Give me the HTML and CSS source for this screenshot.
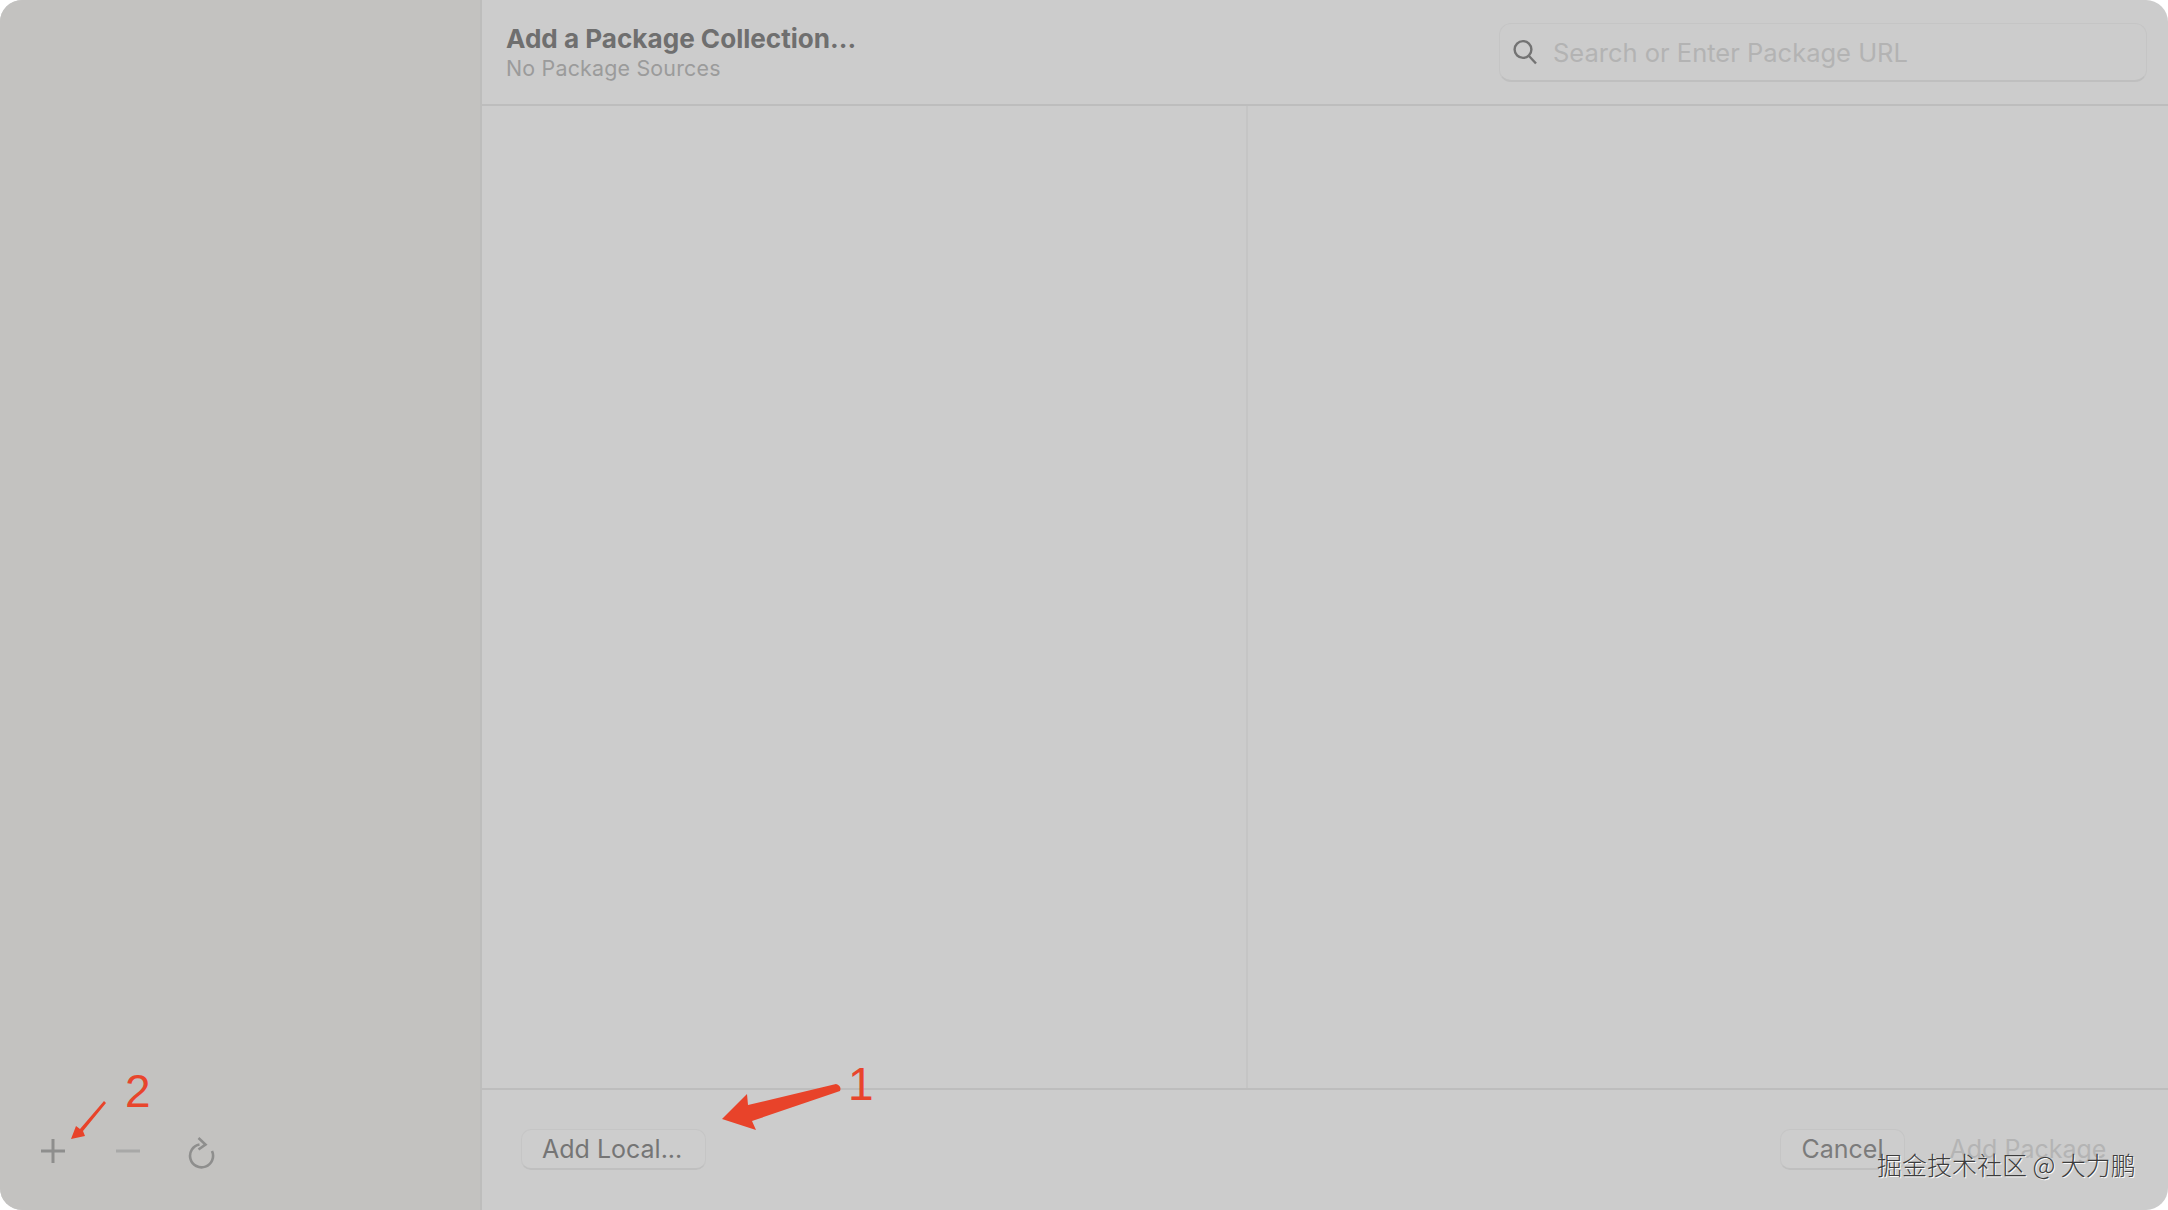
FILE: index.html
```html
<!DOCTYPE html>
<html lang="en">
<head>
<meta charset="utf-8">
<title>Add a Package Collection</title>
<link rel="stylesheet" href="styles.css">
</head>
<body>
<div class="window">
  <aside class="sidebar">
    <div class="tools">
      <svg class="tool" width="26" height="26" viewBox="0 0 26 26"><path d="M13 1v24M1 13h24"/></svg>
      <svg class="tool tool-minus" width="26" height="26" viewBox="0 0 26 26"><path d="M1 13h24"/></svg>
      <svg class="tool tool-refresh" width="28" height="32" viewBox="0 0 28 32"><path d="M12.5 7.5A11.5 11.5 0 1 0 25 14"/><path d="M11.5 1l7 6.5-7 5"/></svg>
    </div>
  </aside>
  <main class="main">
    <header class="header">
      <div class="titles">
        <div class="title">Add a Package Collection...</div>
        <div class="subtitle">No Package Sources</div>
      </div>
      <div class="search">
        <svg class="search-icon" width="26" height="26" viewBox="0 0 26 26"><circle cx="11" cy="10.5" r="8.4"/><path d="M17 17l7 7.5"/></svg>
        <span class="placeholder">Search or Enter Package URL</span>
      </div>
    </header>
    <section class="panes">
      <div class="pane-left"></div>
      <div class="pane-right"></div>
    </section>
    <footer class="footer">
      <button class="btn btn-local">Add Local...</button>
      <div class="spacer"></div>
      <button class="btn btn-cancel">Cancel</button>
      <button class="btn btn-disabled">Add Package</button>
    </footer>
  </main>
  <svg class="annotations" width="2168" height="1210" viewBox="0 0 2168 1210">
    <path class="arrow" d="M722 1119L747 1094 748 1105 836 1084Q842 1086 840 1091L752 1121 756 1130Z"/>
    <path class="arrow" d="M71 1139L76 1126 80 1129 104 1101 106 1103 83 1131 85 1136Z"/>
  </svg>
  <span class="note note-1">1</span>
  <span class="note note-2">2</span>
  <span class="watermark">掘金技术社区 @ 大力鹏</span>
</div>
</body>
</html>
```
FILE: styles.css
```css
* { box-sizing: border-box; }
html, body { margin: 0; padding: 0; background: #fff; }
body { width: 2168px; height: 1210px; overflow: hidden; font-family: Inter, "Liberation Sans", "Noto Sans CJK SC", sans-serif; }
.window { position: relative; display: flex; width: 2168px; height: 1210px; border-radius: 22px; overflow: hidden; background: #cccccc; }
.sidebar { flex: 0 0 482px; display: flex; flex-direction: column; justify-content: flex-end; background: #c3c2c0; border-right: 2px solid #bdbdbc; }
.tools { display: flex; align-items: flex-start; gap: 37px; padding: 0 0 41px 40px; }
.tool { fill: none; stroke: #8e8e8d; stroke-width: 3; }
.tool-minus { margin-left: 12px; stroke: #a8a8a7; }
.tool-refresh { margin-left: 9px; margin-top: -1px; stroke-width: 2.6; }
.main { flex: 1; display: flex; flex-direction: column; min-width: 0; }
.header { flex: 0 0 106px; display: flex; justify-content: space-between; border-bottom: 2px solid #bdbdbd; padding: 23px 21px 0 24px; }
.title { font-size: 26.1px; font-weight: 700; line-height: 31px; color: #6f6f6f; }
.subtitle { font-size: 21.4px; line-height: 28px; color: #9b9b9b; letter-spacing: .2px; }
.search { width: 648px; height: 59px; display: flex; align-items: center; gap: 15px; padding: 0 0 0 12px; border: 1px solid #c5c5c5; border-bottom: 2px solid #bfbfbf; border-radius: 12px; }
.search-icon { fill: none; stroke: #737373; stroke-width: 2.4; flex: none; }
.placeholder { font-size: 25.5px; color: #b3b3b3; }
.panes { flex: 1; display: flex; min-height: 0; }
.pane-left { flex: 0 0 766px; border-right: 2px solid #c5c5c5; }
.pane-right { flex: 1; }
.footer { flex: 0 0 122px; display: flex; align-items: flex-start; border-top: 2px solid #bdbdbd; padding: 39px 0 0 39px; }
.spacer { flex: 1; }
.btn { font-family: inherit; font-size: 25px; line-height: 38px; height: 41px; padding: 0 20px; color: #757575; background: #cdcdcd; border: 1px solid #c5c5c5; border-bottom: 2px solid #bfbfbf; border-radius: 10px; white-space: nowrap; }
.btn-local { padding-right: 23px; }
.btn-cancel { width: 125px; padding: 0; color: #7b7b7b; }
.btn-disabled { width: 220px; padding: 0; margin-left: 13px; margin-right: 30px; color: #b4b4b4; border-color: transparent; background: none; }
.annotations { position: absolute; left: 0; top: 0; pointer-events: none; }
.arrow { fill: #e8432a; }
.note { position: absolute; font-family: "Liberation Sans", sans-serif; font-size: 46px; line-height: 46px; color: #e8452c; }
.note-1 { left: 848px; top: 1061px; }
.note-2 { left: 125px; top: 1068px; }
.watermark { position: absolute; left: 1877px; top: 1148px; font-size: 25px; line-height: 32px; color: #3c3c3c; text-shadow: 1px 1px 0 #fafafa; font-family: "Noto Sans CJK SC", sans-serif; font-weight: 300; white-space: nowrap; }
```
